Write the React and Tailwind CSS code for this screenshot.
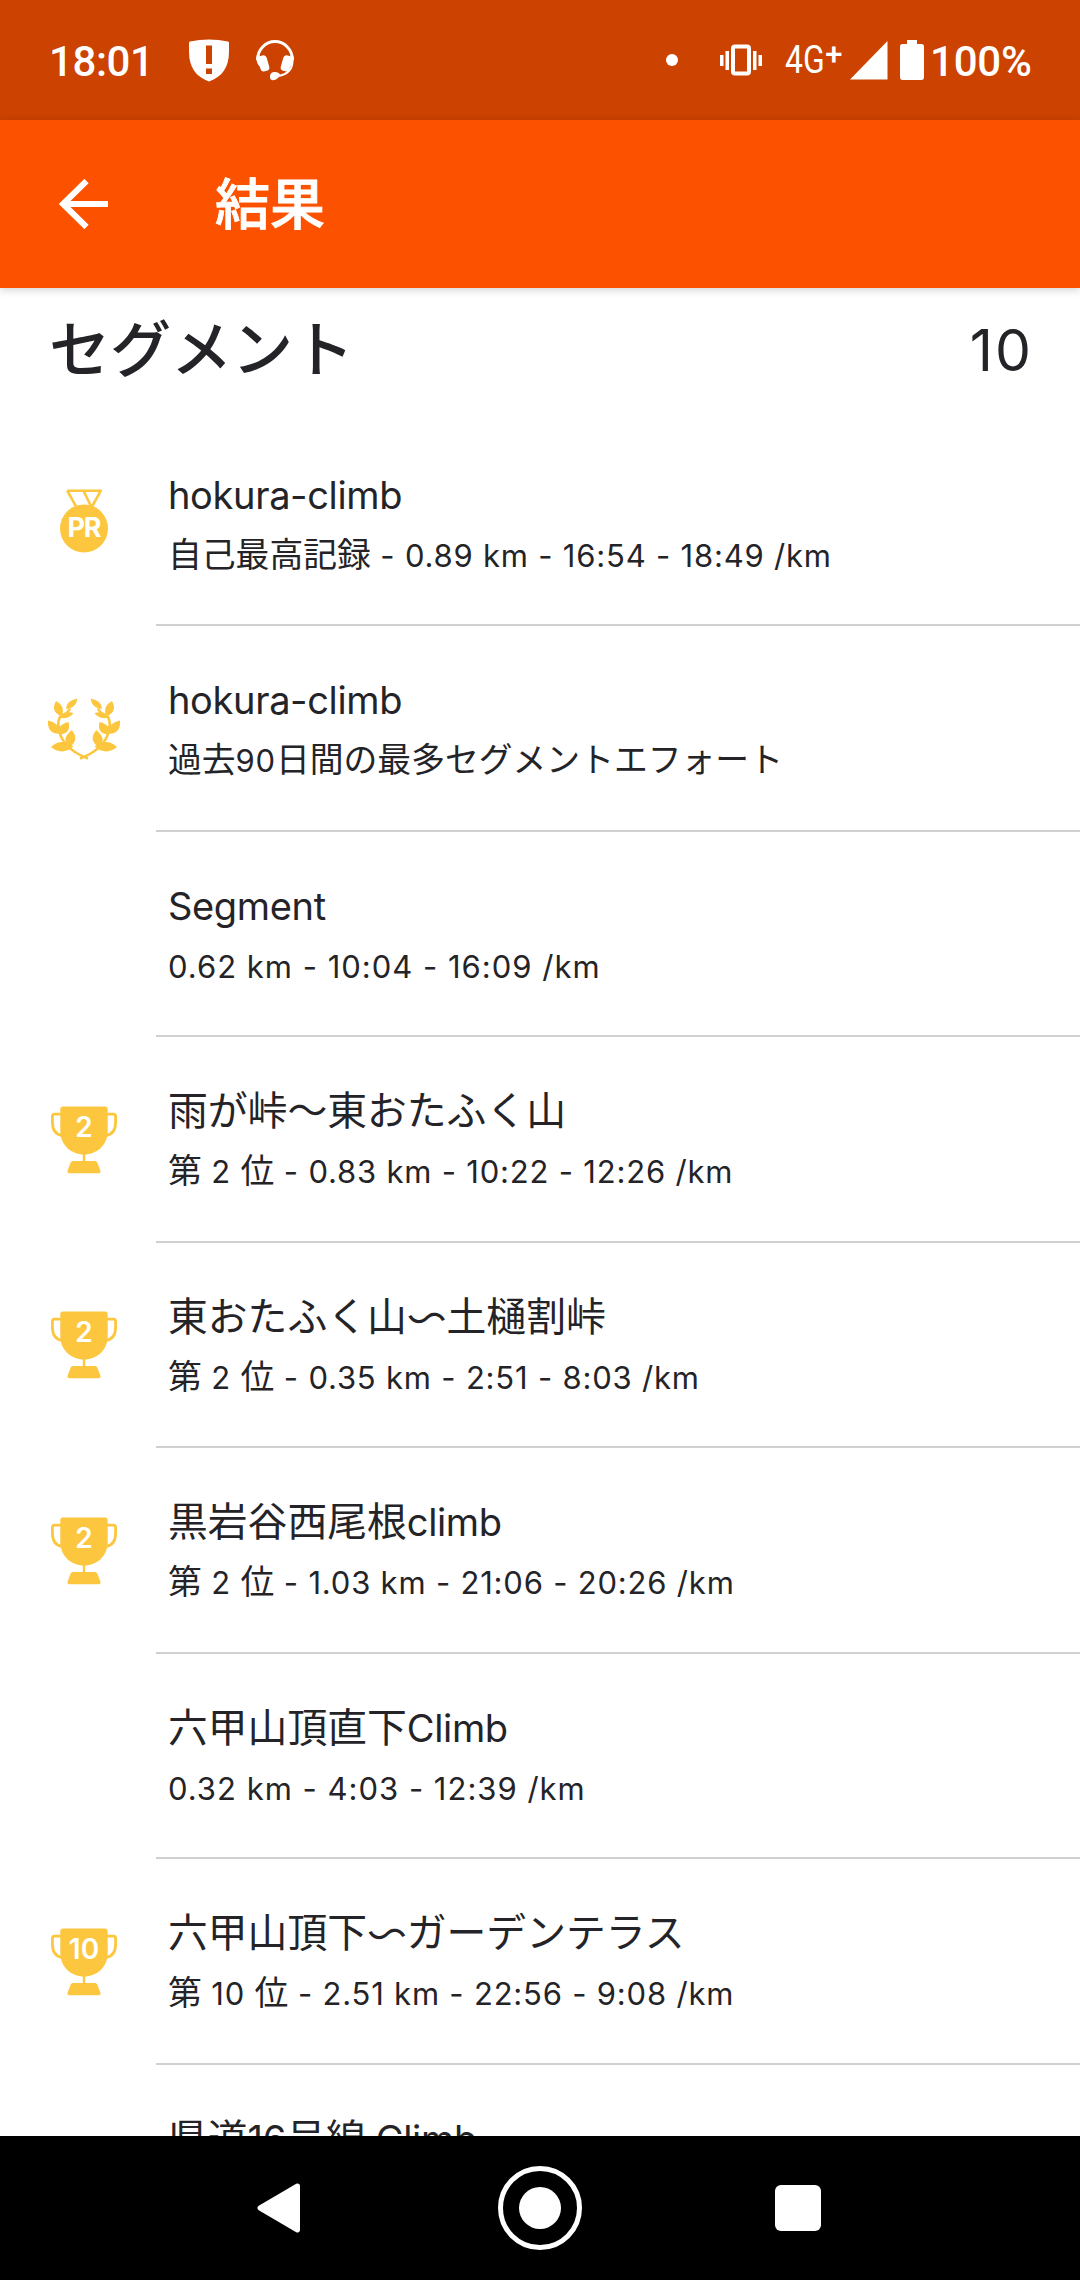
import { Fragment } from 'react';

const segments = [
  { icon: 'pr', name: 'hokura-climb', detail: '自己最高記録 - 0.89 km - 16:54 - 18:49 /km' },
  { icon: 'laurel', name: 'hokura-climb', detail: '過去90日間の最多セグメントエフォート' },
  { name: 'Segment', detail: '0.62 km - 10:04 - 16:09 /km' },
  { icon: 'trophy', rank: 2, name: '雨が峠～東おたふく山', detail: '第 2 位 - 0.83 km - 10:22 - 12:26 /km' },
  { icon: 'trophy', rank: 2, name: '東おたふく山〜土樋割峠', detail: '第 2 位 - 0.35 km - 2:51 - 8:03 /km' },
  { icon: 'trophy', rank: 2, name: '黒岩谷西尾根climb', detail: '第 2 位 - 1.03 km - 21:06 - 20:26 /km' },
  { name: '六甲山頂直下Climb', detail: '0.32 km - 4:03 - 12:39 /km' },
  { icon: 'trophy', rank: 10, name: '六甲山頂下〜ガーデンテラス', detail: '第 10 位 - 2.51 km - 22:56 - 9:08 /km' },
  { name: '県道16号線 Climb', detail: '' }
];

// Latin runs are set a little smaller than the kana and kanji around them
const MixedText = ({ text, latinClass }) => (
  <>
    {text.split(/([\x20-\x7e]+|〜)/).map((part, index) => {
      if (part === '〜') {
        return <span key={index} className="inline-block -scale-y-100">{part}</span>;
      }
      if (/^[\x20-\x7e]+$/.test(part)) {
        return <span key={index} className={latinClass}>{part}</span>;
      }
      return <Fragment key={index}>{part}</Fragment>;
    })}
  </>
);

const MedalIcon = () => (
  <svg viewBox="0 0 72 72" className="w-[72px] h-[72px]">
    <path d="M19.2 3.700h33.6L43 21.5M19.2 3.700l9.5 17M35.5 3.700l8 16.5" fill="none" stroke="#fcc73e" strokeWidth="2.6" strokeLinejoin="round" />
    <circle cx="36" cy="41.500" r="24" fill="#fcc73e" />
    <text x="36" y="50" textAnchor="middle" fontSize="27" fontWeight="700" letterSpacing="-1" fill="#fff" fontFamily="Inter, sans-serif">PR</text>
  </svg>
);

const LaurelBranch = () => (
  <g fill="#fcc73e">
    <path d="M14 18.500q5-1 8-7M10.5 31q-1-7 2-12M10.500 29Q12 51 40 61.500" fill="none" stroke="#fcc73e" strokeWidth="2.6" />
    <path d="M29.500 1.500Q28 11.500 18 12Q18 3.500 29.500 1.500Z" />
    <path d="M8 4Q18 9.500 13.500 19Q2 15 8 4Z" />
    <path d="M25.500 16Q21 23 11 20.500Q14 13.500 25.500 16Z" />
    <path d="M0 23.500Q11 25 12 36.500Q-1 38 0 23.500Z" />
    <path d="M20.500 25Q23.500 37 11 37.500Q8 28 20.500 25Z" />
    <path d="M23.700 33Q32 43 21.500 50Q12 43 23.700 33Z" />
    <path d="M3 50Q13 40.500 25.500 49.500Q14 59 3 50Z" />
  </g>
);

const LaurelIcon = () => (
  <svg viewBox="0 0 72 72" className="w-[72px] h-[72px]">
    <g transform="translate(0 4)">
      <LaurelBranch />
      <g transform="translate(72 0) scale(-1 1)">
        <LaurelBranch />
      </g>
    </g>
  </svg>
);

const TrophyIcon = ({ rank }) => (
  <svg viewBox="0 0 72 72" className="w-[72px] h-[72px]">
    <g fill="none" stroke="#fcc73e" strokeWidth="2.8">
      <path d="M13 10.100H6.500Q4.400 10.100 4.400 12.500V18Q4.400 30 14 31.500" />
      <path d="M59 10.100H65.500Q67.600 10.100 67.600 12.500V18Q67.600 30 58 31.500" />
    </g>
    <path d="M15 2.500H57Q59.700 2.500 59.700 5.200V27C59.700 41 49 50.500 36 50.500S12.300 41 12.300 27V5.200Q12.300 2.500 15 2.500Z" fill="#fcc73e" />
    <path d="M34.800 49H37.200V58H34.800Z" fill="#fcc73e" />
    <path d="M25 57H47Q48.600 57 49.300 58.500L52.400 66.500Q53 69.300 50.500 69.300H21.500Q19 69.300 19.600 66.500L22.700 58.500Q23.400 57 25 57Z" fill="#fcc73e" />
    <text x="36" y="32.500" textAnchor="middle" fontSize="28" fontWeight="600" fill="#fff" fontFamily="Inter, sans-serif">{rank}</text>
  </svg>
);

const StatusBar = () => (
  <div className="h-[120px] shrink-0 bg-[#cc4200] flex items-center justify-between pl-[49px] pr-[49px] text-white font-[Roboto,sans-serif]">
    <div className="flex items-center">
      <span className="w-[105px] pt-[3px] text-[42px] font-medium leading-none tracking-[-0.4px] whitespace-nowrap">18:01</span>
      <svg viewBox="0 0 42 43" className="w-[42px] h-[43px] ml-[34px]">
        <path d="M2 2.500Q21-1.500 40 2.500Q41 2.800 41 4V13C41 28 34 38 21 42.500C8 38 1 28 1 13V4Q1 2.800 2 2.500Z" fill="#fff" />
        <path d="M18 6.500h6V25h-6ZM18 29.500h6V35h-6Z" fill="#cc4200" />
      </svg>
      <svg viewBox="0 0 40 42" className="w-[40px] h-[42px] ml-[25px]">
        <path d="M2.500 21A17.500 18.500 0 1 1 37.500 21" fill="none" stroke="#fff" strokeWidth="3" />
        <path d="M37.500 21Q38 34.500 23 37" fill="none" stroke="#fff" strokeWidth="2" />
        <rect x="4" y="16.500" width="9" height="16" rx="3.500" transform="rotate(-16 8 24)" fill="#fff" />
        <rect x="27" y="16.500" width="9" height="16" rx="3.500" transform="rotate(16 32 24)" fill="#fff" />
        <path d="M1.200 18L4.500 16L6.500 29Q1.500 26 1.200 18ZM38.800 18L35.500 16L33.500 29Q38.500 26 38.800 18Z" fill="#fff" />
        <path d="M15 37Q15.500 33 19.500 33Q25 33 25 36.500Q24.500 38 21 40.500Q14.500 43 15 37Z" fill="#fff" />
      </svg>
    </div>
    <div className="flex items-center">
      <span className="w-3 h-3 rounded-full bg-white" />
      <svg viewBox="0 0 42 32" className="w-[42px] h-[32px] ml-[42px]">
        <path d="M0 11h3.500v11H0ZM5.500 7h3.500v19H5.500ZM33 7h3.500v19H33ZM38.500 11H42v11h-3.500Z" fill="#fff" />
        <rect x="13" y="2.500" width="16" height="27" rx="2" fill="none" stroke="#fff" strokeWidth="4" />
      </svg>
      <span className="flex items-start ml-[23px] h-10 w-[61px] text-[38px] leading-[41px] whitespace-nowrap">
        <span className="inline-block origin-left scale-x-[.84]">4G</span>
        <span className="-ml-[7px] text-[31px] leading-[30px] font-medium">+</span>
      </span>
      <svg viewBox="0 0 38 40" className="w-[38px] h-10 ml-[4px]">
        <path d="M37.500 1V39.500H0Z" fill="#fff" />
      </svg>
      <svg viewBox="0 0 24 40" className="w-6 h-10 ml-[12px]">
        <path d="M7 0h10v4h4.500Q24 4 24 6.500V37Q24 40 21.500 40h-19Q0 40 0 37V6.500Q0 4 2.500 4H7Z" fill="#fff" />
      </svg>
      <span className="ml-[6px] w-[101px] pt-[3px] text-[42px] font-medium leading-none tracking-[-0.2px] whitespace-nowrap">100%</span>
    </div>
  </div>
);

const AppBar = () => (
  <header className="relative z-10 h-[168px] shrink-0 bg-[#fc5200] flex items-center shadow-[0_2px_8px_rgba(0,0,0,0.18)]">
    <svg viewBox="0 0 50 50" className="w-[50px] h-[50px] ml-[59px]">
      <path d="M49 25H4M27.500 2L4 25L27.500 48" fill="none" stroke="#fff" strokeWidth="6" />
    </svg>
    <h1 className="ml-[106px] text-[55px] font-medium leading-none text-white [-webkit-text-stroke:0.8px_white]">結果</h1>
  </header>
);

const SegmentRow = ({ segment }) => (
  <li className="flex h-[205.5px]">
    <div className="w-[156px] shrink-0 flex items-center pl-12">
      {segment.icon === 'pr' && <MedalIcon />}
      {segment.icon === 'laurel' && <LaurelIcon />}
      {segment.icon === 'trophy' && <TrophyIcon rank={segment.rank} />}
    </div>
    <div className="flex-1 border-b-2 border-[#d0d0d0] pl-3 pt-[44px] whitespace-nowrap">
      <p className="h-[60px] text-[39.8px] leading-[60px]">
        <MixedText text={segment.name} latinClass="text-[38px] tracking-[-0.35px]" />
      </p>
      <p className="h-[60px] text-[33.8px] leading-[60px]">
        <MixedText
          text={segment.detail}
          latinClass={segment.icon ? 'text-[31px] tracking-[0.8px]' : 'text-[31px] tracking-[1px]'}
        />
      </p>
    </div>
  </li>
);

const BottomNav = () => (
  <nav className="h-36 shrink-0 bg-black flex items-center pl-[257px]">
    <svg viewBox="0 0 44 50" className="w-[44px] h-[50px]">
      <path d="M40.500 3L3 25L40.500 47Z" fill="#fff" stroke="#fff" strokeWidth="5" strokeLinejoin="round" />
    </svg>
    <div className="ml-[197px] w-[84px] h-[84px] rounded-full border-[5px] border-white flex items-center justify-center">
      <div className="w-[42px] h-[42px] rounded-full bg-white" />
    </div>
    <div className="ml-[193px] w-[46px] h-[46px] rounded-[6px] bg-white" />
  </nav>
);

const App = () => {
  return (
    <div lang="ja" className="w-[1080px] h-[2280px] overflow-hidden flex flex-col bg-white text-[#242428] font-[Inter,'Noto_Sans_CJK_JP',sans-serif]">
      <StatusBar />
      <AppBar />
      <main className="flex-1 min-h-0 overflow-hidden">
        <div className="h-[132.5px] flex justify-between pl-[49px] pr-[47px]">
          <h2 className="text-[61px] leading-[124px] font-medium">セグメント</h2>
          <span className="text-[57px] leading-[126px] tracking-[2px]">10</span>
        </div>
        <ul>
          {segments.map((segment, index) => (
            <SegmentRow key={index} segment={segment} />
          ))}
        </ul>
      </main>
      <BottomNav />
    </div>
  );
};

export default App;
